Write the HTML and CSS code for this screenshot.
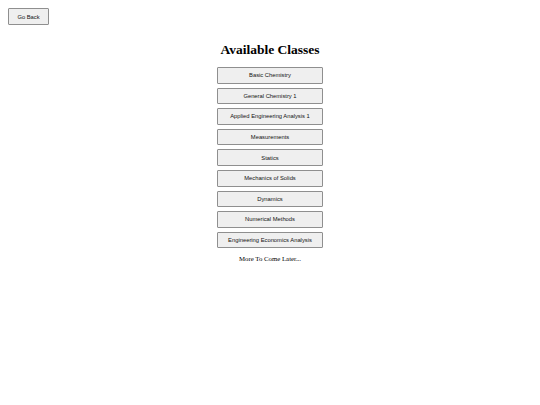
FILE: index.html
```html
<!DOCTYPE html>
<html>
<head>
<meta charset="utf-8">
<link rel="stylesheet" href="styles.css">
</head>
<body>
<div class="top">
  <button class="btn back">Go Back</button>
</div>
<main class="classes">
  <h1 class="title">Available Classes</h1>
  <div class="list">
    <button class="btn cls">Basic Chemistry</button>
    <button class="btn cls">General Chemistry 1</button>
    <button class="btn cls">Applied Engineering Analysis 1</button>
    <button class="btn cls">Measurements</button>
    <button class="btn cls">Statics</button>
    <button class="btn cls">Mechanics of Solids</button>
    <button class="btn cls">Dynamics</button>
    <button class="btn cls">Numerical Methods</button>
    <button class="btn cls">Engineering Economics Analysis</button>
  </div>
  <p class="later">More To Come Later...</p>
</main>
</body>
</html>
```
FILE: styles.css
```css
html, body {
  margin: 0;
  padding: 0;
  background: #fff;
}
body {
  padding: 8px;
  font-family: "Liberation Serif", serif;
  color: #000;
}
.top {
  display: flex;
}
.btn {
  font-family: "Liberation Sans", Arial, sans-serif;
  font-size: 5.8px;
  color: #111;
  background: #efefef;
  border: 1px solid #8f8f8f;
  border-radius: 1px;
  padding: 0;
  margin: 0;
}
.back {
  width: 41px;
  height: 17px;
}
.classes {
  display: flex;
  flex-direction: column;
  align-items: center;
}
.title {
  font-size: 13.5px;
  font-weight: bold;
  margin: 16px 0 8px;
  line-height: 18px;
}
.list {
  display: flex;
  flex-direction: column;
  gap: 4px;
}
.cls {
  width: 106px;
  height: 16.6px;
}
.later {
  font-size: 6.8px;
  margin: 6px 0 0;
  line-height: 10px;
}
```
